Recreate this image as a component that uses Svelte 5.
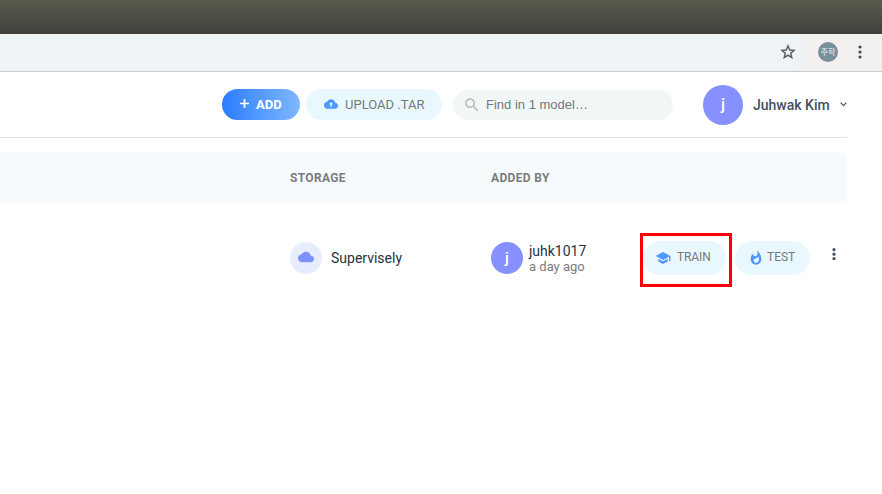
<script>
  const cloud = 'M19.35 10.04C18.67 6.59 15.64 4 12 4 9.11 4 6.6 5.64 5.35 8.04 2.34 8.36 0 10.91 0 14c0 3.31 2.69 6 6 6h13c2.76 0 5-2.24 5-5 0-2.64-2.05-4.78-4.65-4.96z';
  const models = [{ storage: 'Supervisely', user: 'juhk1017', added: 'a day ago' }];
</script>

<div class="page">
  <div class="titlebar"></div>
  <div class="toolbar">
    <div class="omnibox">
      <svg width="18" height="18" viewBox="0 0 24 24" fill="#55585c" stroke="#55585c" stroke-width=".4"><path d="M22 9.24l-7.19-.62L12 2 9.19 8.63 2 9.24l5.46 4.73L5.82 21 12 17.27 18.18 21l-1.63-7.03L22 9.24zM12 15.4l-3.76 2.27 1-4.28-3.32-2.88 4.38-.38L12 6.1l1.71 4.04 4.38.38-3.32 2.88 1 4.28L12 15.4z" /></svg>
    </div>
    <div class="profile">주학</div>
    <svg class="menu" width="4" height="14" viewBox="0 0 4 14" fill="#484848"><circle cx="2" cy="2" r="1.6" /><circle cx="2" cy="7" r="1.6" /><circle cx="2" cy="12" r="1.6" /></svg>
  </div>

  <header>
    <button class="add">
      <svg width="9" height="9" viewBox="0 0 9 9"><path d="M4.5 0v9M0 4.5h9" stroke="#fff" stroke-width="1.7" /></svg>
      <span>ADD</span>
    </button>
    <button class="upload">
      <svg width="14" height="14" viewBox="0 0 24 24" fill="#4f98fd"><path fill-rule="evenodd" d="{cloud}M13.2 12.5v4h-2.4v-4H8.4l3.6-3.6 3.6 3.6z" /></svg>
      <span>UPLOAD .TAR</span>
    </button>
    <div class="search">
      <svg width="18" height="18" viewBox="0 0 24 24" fill="#b3b7b8"><path d="M15.5 14h-.79l-.28-.27C15.41 12.59 16 11.11 16 9.5 16 5.91 13.09 3 9.5 3S3 5.91 3 9.5 5.91 16 9.5 16c1.61 0 3.09-.59 4.23-1.57l.27.28v.79l5 4.99L20.49 19l-4.99-5zm-6 0C7.01 14 5 11.99 5 9.5S7.01 5 9.5 5 14 7.01 14 9.5 11.99 14 9.5 14z" /></svg>
      <span>Find in 1 model…</span>
    </div>
    <div class="avatar large">j</div>
    <div class="account">Juhwak Kim</div>
    <svg class="chevron" width="7" height="5" viewBox="0 0 7 5"><path d="M.6.7l2.9 2.9L6.4.7" fill="none" stroke="#435161" stroke-width="1.2" /></svg>
  </header>

  <main>
    <div class="thead">
      <div class="storage">STORAGE</div>
      <div>ADDED BY</div>
    </div>
    {#each models as model}
      <div class="row">
        <div class="storage">
          <div class="disc"><svg width="16" height="16" viewBox="0 0 24 24" fill="#7b93fd"><path d={cloud} /></svg></div>
          <span class="store-name">{model.storage}</span>
        </div>
        <div class="person">
          <div class="avatar">j</div>
          <div class="who"><div class="user">{model.user}</div><div class="ago">{model.added}</div></div>
        </div>
        <div class="focus">
          <button class="train">
            <svg width="16" height="16" viewBox="0 0 24 24" fill="#4f98fd"><path d="M12 3 1 9l11 6 9-4.91V17h2V9M5 13.18v4L12 21l7-3.82v-4L12 17z" /></svg>
            <span>TRAIN</span>
          </button>
        </div>
        <button class="test">
          <svg width="16" height="16" viewBox="0 0 24 24" fill="#4f98fd"><path d="M13.5.67s.74 2.65.74 4.8c0 2.06-1.35 3.73-3.41 3.73-2.07 0-3.63-1.67-3.63-3.73l.03-.36C5.21 7.51 4 10.62 4 14c0 4.42 3.58 8 8 8s8-3.58 8-8C20 8.61 17.41 3.8 13.5.67zM11.71 19c-1.78 0-3.22-1.4-3.22-3.14 0-1.62 1.05-2.76 2.81-3.12 1.77-.36 3.6-1.21 4.62-2.58.39 1.29.59 2.65.59 4.04 0 2.65-2.15 4.8-4.8 4.8z" /></svg>
          <span>TEST</span>
        </button>
        <svg class="more" width="4" height="12" viewBox="0 0 4 12" fill="#435161"><circle cx="2" cy="1.7" r="1.6" /><circle cx="2" cy="6.2" r="1.6" /><circle cx="2" cy="10.7" r="1.6" /></svg>
      </div>
    {/each}
  </main>
</div>

<style>
  .page { width: 882px; height: 494px; overflow: hidden; background: #fff; font-family: Roboto, sans-serif; color: #263340; white-space: nowrap; }
  .page * { box-sizing: border-box; }
  svg { display: block; flex: none; }
  button { border: 0; margin: 0; padding: 0; font: inherit; display: flex; align-items: center; flex: none; }
  .titlebar { height: 34px; background: linear-gradient(#5b5a4f, #403f3b); }
  .toolbar { height: 38px; display: flex; align-items: center; background: #f2f1f0; border-bottom: 1px solid #cbcbca; }
  .omnibox { width: 805px; height: 37px; display: flex; align-items: center; justify-content: flex-end; padding: 0 8px 1px 0; border-radius: 0 16px 16px 0; background: #eef3f5; }
  .profile { width: 20px; height: 20px; margin: -1px 0 0 13px; border-radius: 50%; background: #78909c; color: #eef2f4; font: 8px/20px "Noto Sans CJK KR", sans-serif; text-align: center; }
  .menu { margin: -1px 0 0 20px; }
  header { width: 847px; height: 66px; display: flex; align-items: center; padding-left: 222px; border-bottom: 1px solid #dedfe4; }
  .add, .upload { height: 31px; border-radius: 16px; font-size: 13px; }
  .add { width: 78px; padding-left: 18px; gap: 7px; background: linear-gradient(90deg, #2b7cff, #80b8ff); color: #fff; font-weight: 700; }
  .add svg { margin-top: -2px; }
  .upload { width: 136px; margin-left: 6px; padding-left: 18px; gap: 7px; background: #e9f8ff; color: #777; }
  .upload svg { margin-top: -2px; }
  .search { width: 220px; height: 30px; margin-left: 11px; padding-left: 10px; display: flex; align-items: center; gap: 5px; border-radius: 15px; background: #f1f6f7; color: #777; font: 13px "Liberation Sans", sans-serif; flex: none; }
  .avatar { width: 32px; height: 32px; flex: none; border-radius: 50%; background: #8790ff; color: #fff; font-size: 15px; font-weight: 500; line-height: 32px; text-align: center; }
  .large { width: 40px; height: 40px; margin-left: 30px; font-size: 16px; line-height: 40px; }
  .account { width: 77px; margin-left: 10px; color: #435161; font-size: 14px; font-weight: 500; }
  .chevron { margin-left: 10px; }
  main { width: 847px; padding-top: 15px; }
  .thead { height: 50px; display: flex; align-items: center; padding-left: 290px; background: #f6fafd; color: #7c7c7c; font-size: 12px; font-weight: 700; letter-spacing: .35px; }
  .storage { width: 201px; flex: none; display: flex; align-items: center; }
  .row { height: 114px; display: flex; align-items: center; padding-left: 290px; font-size: 14px; }
  .disc { width: 32px; height: 32px; border-radius: 50%; background: #e7ecff; display: flex; align-items: center; justify-content: center; }
  .disc svg { margin-top: -2px; }
  .store-name { margin-left: 9px; }
  .person { width: 149px; flex: none; display: flex; align-items: center; gap: 6px; margin-top: -2px; }
  .person .avatar { margin-top: -2px; }
  .row .storage { margin-top: -4px; }
  .user { line-height: 16px; }
  .ago { font-size: 13px; line-height: 16px; color: #7b7b7b; }
  .focus { width: 92px; height: 54px; flex: none; border: 3px solid #fb0007; padding-top: 5px; }
  .train, .test { height: 34px; border-radius: 17px; background: #e9f8ff; color: #777; font-size: 12px; padding-bottom: 2px; }
  .train svg, .test svg { margin-top: 1px; }
  .train { width: 83px; padding-left: 12px; gap: 6px; letter-spacing: -.1px; }
  .test { width: 75px; margin: -4px 0 0 3px; padding-left: 13px; gap: 3px; }
  .more { margin: -13px 0 0 22px; }
</style>
